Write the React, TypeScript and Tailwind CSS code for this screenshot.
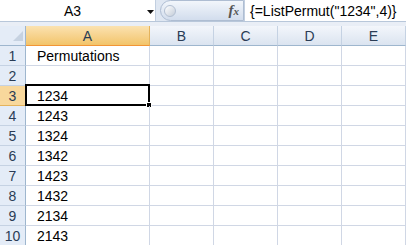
import React from 'react';

const rows = ['Permutations', '', '1234', '1243', '1324', '1342', '1423', '1432', '2134', '2143'];
const cols = ['B', 'C', 'D', 'E'];

const font = { fontFamily: '"Liberation Sans", Arial, sans-serif' };

const FormulaBar: React.FC = () => (
  <div className="flex h-[22px] bg-[#dfe7f2] border-b border-[#b8c7da]">
    {/* Name box */}
    <div className="relative flex w-[156px] items-center bg-white border-r border-[#c2cfe0]">
      <span className="flex-1 pr-[10px] pt-[1px] text-center text-[14px] text-black">A3</span>
      <svg className="absolute left-[147px] top-[10px]" width="7" height="4" viewBox="0 0 7 4">
        <path d="M0 0h7L3.5 4z" fill="#111" />
      </svg>
    </div>
    {/* pill with fx */}
    <div className="flex w-[88px] items-center bg-[#dfe7f2] pl-[4px]">
      <div className="flex h-[21px] flex-1 items-center rounded-l-full border border-[#aebdd2] bg-gradient-to-b from-[#f2f6fb] to-[#d2dded] pl-[3px]">
        <div className="h-[12px] w-[12px] rounded-full border border-[#b3c0d2] bg-gradient-to-br from-white to-[#c4cdd9]" />
        <span
          className="ml-auto mr-[4px] text-[15px] font-bold italic text-[#555]"
          style={{ fontFamily: '"Liberation Serif", "Times New Roman", serif' }}
        >
          f<span className="text-[11px]">x</span>
        </span>
      </div>
    </div>
    {/* formula */}
    <div className="flex flex-1 items-center bg-white pl-[5px] pt-[1px] text-[14px] text-black border-l border-[#c2cfe0]">
      {'{=ListPermut("1234",4)}'}
    </div>
  </div>
);

export default function App() {
  return (
    <div className="w-[406px] h-[245px] overflow-hidden bg-white" style={font}>
      <FormulaBar />
      <div className="h-[4px] bg-[#e9eef6]" />
      <div className="grid grid-cols-[26px_124px_64px_64px_64px_64px]">
        {/* header row */}
        <div className="relative h-[20px] bg-[#e4ecf7] border-r border-b border-[#9eb6ce]">
          <svg className="absolute left-[13px] top-[5px]" width="10" height="10" viewBox="0 0 10 10">
            <path d="M10 0V10H0z" fill="#c6d2e1" />
          </svg>
        </div>
        <div className="flex h-[20px] items-center justify-center pt-[1px] bg-gradient-to-b from-[#fbe2b0] to-[#f2c469] border-r border-b border-r-[#e4b35c] border-b-[#f29536] text-[14px] text-[#2a3c55]">
          A
        </div>
        {cols.map((c) => (
          <div
            key={c}
            className="flex h-[20px] items-center justify-center pt-[1px] bg-gradient-to-b from-[#f3f6fb] to-[#dbe4f0] border-r border-b border-r-[#c5d2e3] border-b-[#9eb6ce] text-[14px] text-[#2a3c55]"
          >
            {c}
          </div>
        ))}

        {rows.map((val, i) => {
          const sel = i === 2;
          return (
            <React.Fragment key={i}>
              <div
                className={`flex h-[20px] items-center justify-center pt-[2px] border-r border-b text-[14px] text-[#2a3c55] ${
                  sel
                    ? 'bg-[#f8d89c] border-r-[#f29536] border-b-[#e4b35c]'
                    : 'bg-[#e4ecf7] border-r-[#9eb6ce] border-b-[#c5d2e3]'
                }`}
              >
                {i + 1}
              </div>
              <div className="relative flex h-[20px] items-center pl-[11px] pt-[2px] border-r border-b border-[#d0d7e5] text-[14px] text-black">
                {val}
                {sel && (
                  <>
                    <div className="absolute -left-[1px] -top-[2px] -right-[1px] -bottom-[1px] border-2 border-black" />
                    <div className="absolute -right-[3px] -bottom-[3px] h-[6px] w-[6px] bg-black border border-white" />
                  </>
                )}
              </div>
              {cols.map((c) => (
                <div key={c} className="h-[20px] border-r border-b border-[#d0d7e5]" />
              ))}
            </React.Fragment>
          );
        })}
      </div>
    </div>
  );
}
